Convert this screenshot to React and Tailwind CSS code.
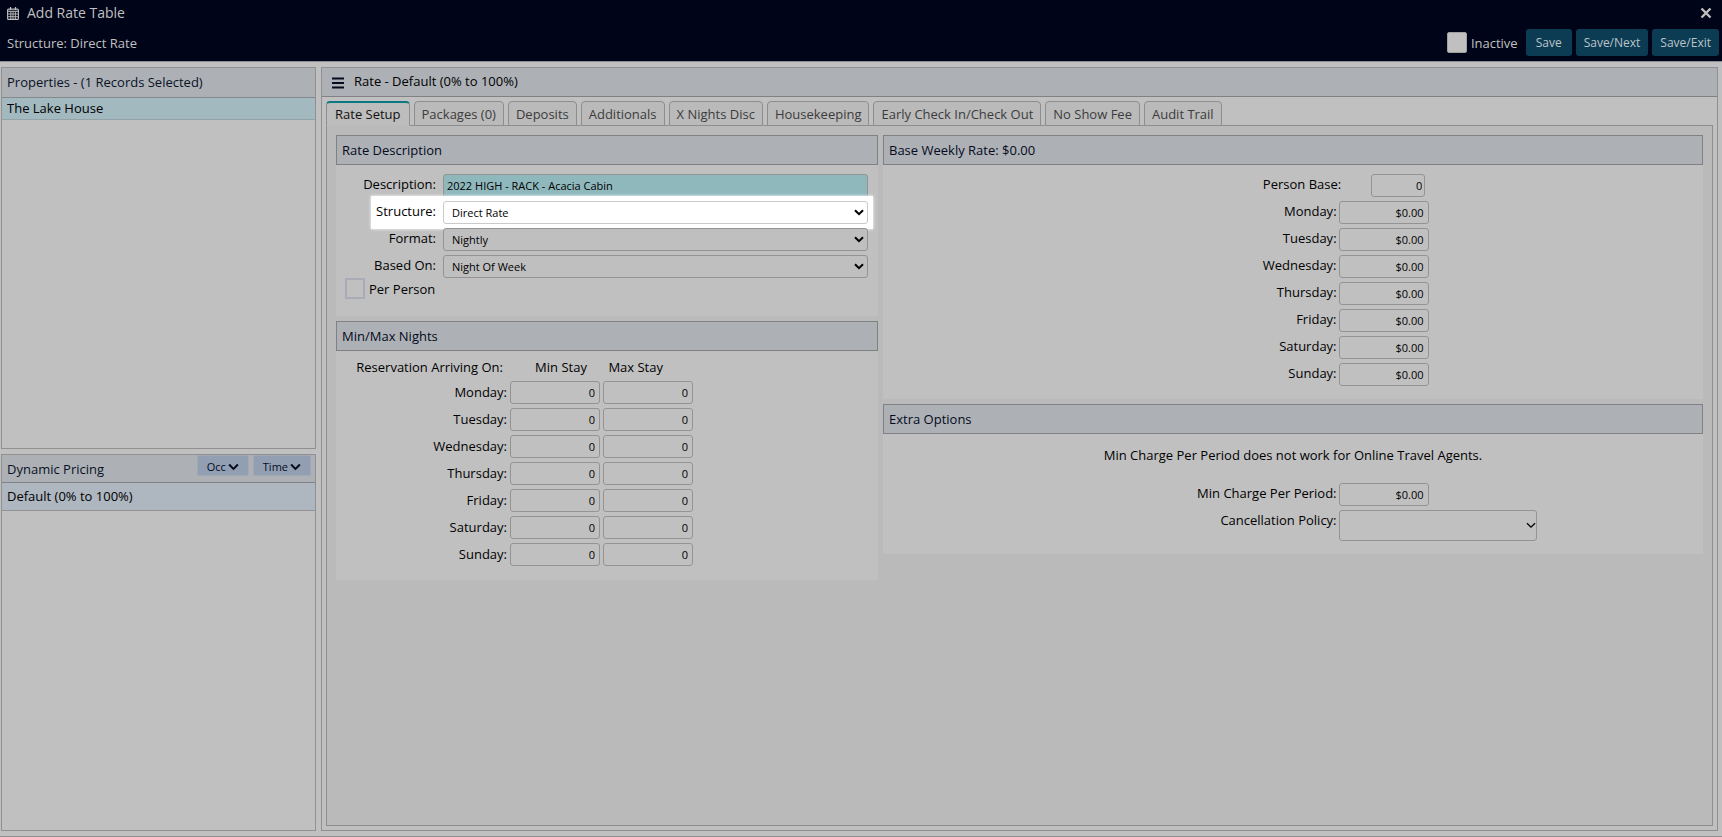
import React from 'react';
import clsx from 'clsx';

const DAYS = ['Monday', 'Tuesday', 'Wednesday', 'Thursday', 'Friday', 'Saturday', 'Sunday'];

const TABS = [
  'Rate Setup',
  'Packages (0)',
  'Deposits',
  'Additionals',
  'X Nights Disc',
  'Housekeeping',
  'Early Check In/Check Out',
  'No Show Fee',
  'Audit Trail',
];

function Chevron({ className, strokeWidth = 2 }) {
  return (
    <svg viewBox="0 0 10 7" className={className} fill="none" stroke="currentColor" strokeWidth={strokeWidth}>
      <path d="M1 1.2l4 4 4-4" />
    </svg>
  );
}

function CalendarIcon() {
  return (
    <svg viewBox="0 0 12 13" className="w-3 h-[13px]" fill="none" stroke="currentColor">
      <path d="M3.5 0v3M8.5 0v3" strokeWidth="1.2" />
      <rect x="0.6" y="2.1" width="10.8" height="10.3" rx="1" strokeWidth="1.1" />
      <path d="M1 4.3h10" strokeWidth="1.1" />
      <path d="M1 7h10M1 9.7h10M3.8 5v7.4M6 5v7.4M8.4 5v7.4" strokeWidth="0.9" />
    </svg>
  );
}

function SectionTitle({ children }) {
  return (
    <h2 className="h-[30px] flex items-center px-[5px] border border-[#7f8184] bg-[#adb1b6] text-[#050a1c]">
      {children}
    </h2>
  );
}

function TextBox({ className, ...props }) {
  return (
    <input
      type="text"
      className={clsx('h-[23px] border border-[#949494] rounded-[3px] px-1 text-[11px] text-black', className)}
      {...props}
    />
  );
}

function SelectRow({ id, label, value, highlighted }) {
  return (
    <div className="relative flex">
      {highlighted && (
        <span className="absolute -top-[5px] -bottom-[5px] left-[35px] -right-[5px] bg-white shadow-[0_0_3px_#fff]"></span>
      )}
      <label htmlFor={id} className="relative w-[107px] pr-[7px] text-right leading-[21px]">{label}</label>
      <div className="relative flex-1">
        <select
          id={id}
          defaultValue={value}
          className={clsx(
            'block w-full h-[23px] appearance-none border rounded-[3px] px-2 pt-px text-[11px] text-black',
            highlighted ? 'bg-white border-[#cacaca]' : 'bg-[#bfbfbf] border-[#949494]'
          )}
        >
          <option>{value}</option>
        </select>
        <Chevron className="absolute right-1 top-2 w-[10px] h-[7px] pointer-events-none" />
      </div>
    </div>
  );
}

function MoneyRow({ id, label }) {
  return (
    <div className="grid grid-cols-[5fr_4fr]">
      <label htmlFor={id} className="pr-[2px] text-right leading-[21px]">{label}</label>
      <TextBox id={id} className="w-[90px] text-right" defaultValue="$0.00" />
    </div>
  );
}

function Header() {
  return (
    <header className="h-[62px] bg-[#000418] border-b border-[#8b8b93] text-[#c0c0c0] pl-[7px] pr-[3px]">
      <div className="h-[26px] flex items-center">
        <CalendarIcon />
        <h1 className="ml-2 text-sm">Add Rate Table</h1>
        <button type="button" aria-label="Close" className="ml-auto mr-[7px]">
          <svg viewBox="0 0 12 12" className="w-3 h-3" stroke="currentColor" strokeWidth="2.4">
            <path d="M1.5 1.5l9 9M10.5 1.5l-9 9" />
          </svg>
        </button>
      </div>
      <div className="flex items-center pt-[3px]">
        <p>Structure: Direct Rate</p>
        <div className="ml-auto flex items-center gap-1">
          <label className="flex items-center gap-1 mr-1">
            <input type="checkbox" className="appearance-none w-5 h-[21px] rounded-[2px] border border-[#a0a0a0] bg-[#c0c0c0]" />
            Inactive
          </label>
          {['Save', 'Save/Next', 'Save/Exit'].map((label) => (
            <button
              key={label}
              type="button"
              className="h-[27px] px-2 rounded-[3px] bg-[#0c3c54] text-xs text-[#bcc4c8] first-of-type:px-[10px]"
            >
              {label}
            </button>
          ))}
        </div>
      </div>
    </header>
  );
}

function Sidebar() {
  return (
    <aside className="w-[315px] shrink-0 grid grid-rows-[382fr_377fr] gap-[5px]">
      <section className="border border-[#909090]">
        <h2 className="h-[30px] flex items-center px-[5px] pb-[2px] border-b border-[#85888c] bg-[#adb1b6] text-[#0a1226]">
          Properties - (1 Records Selected)
        </h2>
        <div className="h-[22px] flex items-center px-[5px] pb-[2px] border-b border-[#93a3a8] bg-[#a2b9bf] text-black">
          The Lake House
        </div>
      </section>
      <section className="border border-[#909090]">
        <div className="h-[28px] flex items-start border-b border-[#7f8184] bg-[#adb1b6] text-[#0a1226] pr-1">
          <h2 className="px-[5px] leading-[29px]">Dynamic Pricing</h2>
          <div className="ml-auto flex gap-1">
            {['Occ', 'Time'].map((label) => (
              <button
                key={label}
                type="button"
                className="h-[21px] px-[9px] pt-[2px] flex items-center gap-[2px] rounded-[2px] border border-[#a2a9b4] bg-[#929fb3] text-[11px] text-[#050a1c]"
              >
                {label}
                <Chevron className="w-[11px] h-2" strokeWidth={1.8} />
              </button>
            ))}
          </div>
        </div>
        <div className="h-[28px] flex items-center px-[5px] pb-[2px] border-b border-[#949494] bg-[#aeb6bf] text-black">
          Default (0% to 100%)
        </div>
      </section>
    </aside>
  );
}

function RateDescription() {
  return (
    <section className="bg-[#c0c0c0]">
      <SectionTitle>Rate Description</SectionTitle>
      <div className="pt-[9px] pr-[10px] pb-[17px] flex flex-col gap-1">
        <div className="flex">
          <label htmlFor="description" className="w-[107px] pr-[7px] text-right leading-[21px]">Description:</label>
          <TextBox
            id="description"
            className="flex-1 bg-[#8fb8bd] px-[3px]"
            defaultValue="2022 HIGH - RACK - Acacia Cabin"
          />
        </div>
        <SelectRow id="structure" label="Structure:" value="Direct Rate" highlighted />
        <SelectRow id="format" label="Format:" value="Nightly" />
        <SelectRow id="basedOn" label="Based On:" value="Night Of Week" />
        <label className="flex items-center gap-1 pl-[9px] -mt-1">
          <input type="checkbox" className="appearance-none w-5 h-[21px] border-2 border-[#a9abb6]" />
          Per Person
        </label>
      </div>
    </section>
  );
}

function MinMaxNights() {
  return (
    <section className="bg-[#c0c0c0]">
      <SectionTitle>Min/Max Nights</SectionTitle>
      <table className="mt-1 mb-3">
        <thead>
          <tr className="h-6">
            <th className="w-[174px] pr-[7px] text-right font-normal">Reservation Arriving On:</th>
            <th className="w-[93px] pl-[9px] font-normal">Min Stay</th>
            <th className="w-[93px] pr-[33px] font-normal text-right">Max Stay</th>
          </tr>
        </thead>
        <tbody>
          {DAYS.map((day) => (
            <tr key={day} className="h-[27px]">
              <th scope="row" className="pr-[3px] text-right font-normal pb-[2px]">{day}:</th>
              <td>
                <TextBox aria-label={`${day} min stay`} className="block w-[90px] text-right" defaultValue="0" />
              </td>
              <td>
                <TextBox aria-label={`${day} max stay`} className="block w-[90px] text-right" defaultValue="0" />
              </td>
            </tr>
          ))}
        </tbody>
      </table>
    </section>
  );
}

function BaseRate() {
  return (
    <section className="bg-[#c0c0c0]">
      <SectionTitle>Base Weekly Rate: $0.00</SectionTitle>
      <div className="pt-[9px] pb-[13px] flex flex-col gap-1">
        <div className="grid grid-cols-[14fr_11fr]">
          <label htmlFor="personBase" className="pr-px text-right leading-[21px]">Person Base:</label>
          <TextBox id="personBase" className="w-[54px] ml-[29px] px-[2px] text-right" defaultValue="0" />
        </div>
        {DAYS.map((day) => (
          <MoneyRow key={day} id={`rate-${day}`} label={`${day}:`} />
        ))}
      </div>
    </section>
  );
}

function ExtraOptions() {
  return (
    <section className="bg-[#c0c0c0]">
      <SectionTitle>Extra Options</SectionTitle>
      <div className="pt-[11px] pb-[13px] flex flex-col gap-1">
        <p className="text-center leading-5 mb-[14px]">
          Min Charge Per Period does not work for Online Travel Agents.
        </p>
        <MoneyRow id="minCharge" label="Min Charge Per Period:" />
        <div className="grid grid-cols-[5fr_4fr]">
          <label htmlFor="cancelPolicy" className="pr-[2px] text-right leading-[21px]">Cancellation Policy:</label>
          <div className="relative w-[198px]">
            <select
              id="cancelPolicy"
              className="block w-full h-[31px] appearance-none border border-[#949494] rounded-[3px] bg-[#c0c0c0]"
            ></select>
            <Chevron className="absolute right-px top-3 w-[10px] h-[7px] pointer-events-none" strokeWidth={1.3} />
          </div>
        </div>
      </div>
    </section>
  );
}

export default function App() {
  return (
    <div className="min-h-screen flex flex-col bg-[#c0c0c0] border-b border-[#8e8e8e] font-['Open_Sans',sans-serif] text-[13px] leading-[18px] text-black">
      <Header />
      <main className="flex-1 flex gap-[5px] pt-[5px] pr-1 pb-[5px] pl-px">
        <Sidebar />
        <section className="flex-1 flex flex-col border border-[#909090]">
          <div className="h-[29px] flex items-center bg-[#adb1b6] border-b border-[#7f8184] pl-[10px] pb-[2px]">
            <button type="button" aria-label="Menu">
              <svg viewBox="0 0 12 12" className="w-3 h-3 mt-1" stroke="#050a1c" strokeWidth="1.8">
                <path d="M0 1.5h12M0 6h12M0 10.5h12" />
              </svg>
            </button>
            <h2 className="ml-[10px]">Rate - Default (0% to 100%)</h2>
          </div>

          <div className="flex-1 flex flex-col p-1">
            {/* Tabs */}
            <nav className="flex gap-1 -mb-px">
              {TABS.map((tab, i) => (
                <button
                  key={tab}
                  type="button"
                  className={clsx(
                    'relative h-[25px] border border-[#8e8e8e] rounded-t-[4px]',
                    i === 0
                      ? 'px-2 border-t-2 border-t-[#0b7a80] border-b-[#bababa] bg-[#bdbdbd] text-[#111]'
                      : 'px-[7px] bg-[#bababa] text-[#3c3c3c]'
                  )}
                >
                  {tab}
                </button>
              ))}
            </nav>

            <div className="flex-1 border border-[#8e8e8e] bg-[#bababa] p-[9px]">
              <div className="grid grid-cols-[542fr_820fr] gap-[5px] items-start">
                <div className="flex flex-col gap-[5px]">
                  <RateDescription />
                  <MinMaxNights />
                </div>
                <div className="flex flex-col gap-[5px]">
                  <BaseRate />
                  <ExtraOptions />
                </div>
              </div>
            </div>
          </div>
        </section>
      </main>
    </div>
  );
}
